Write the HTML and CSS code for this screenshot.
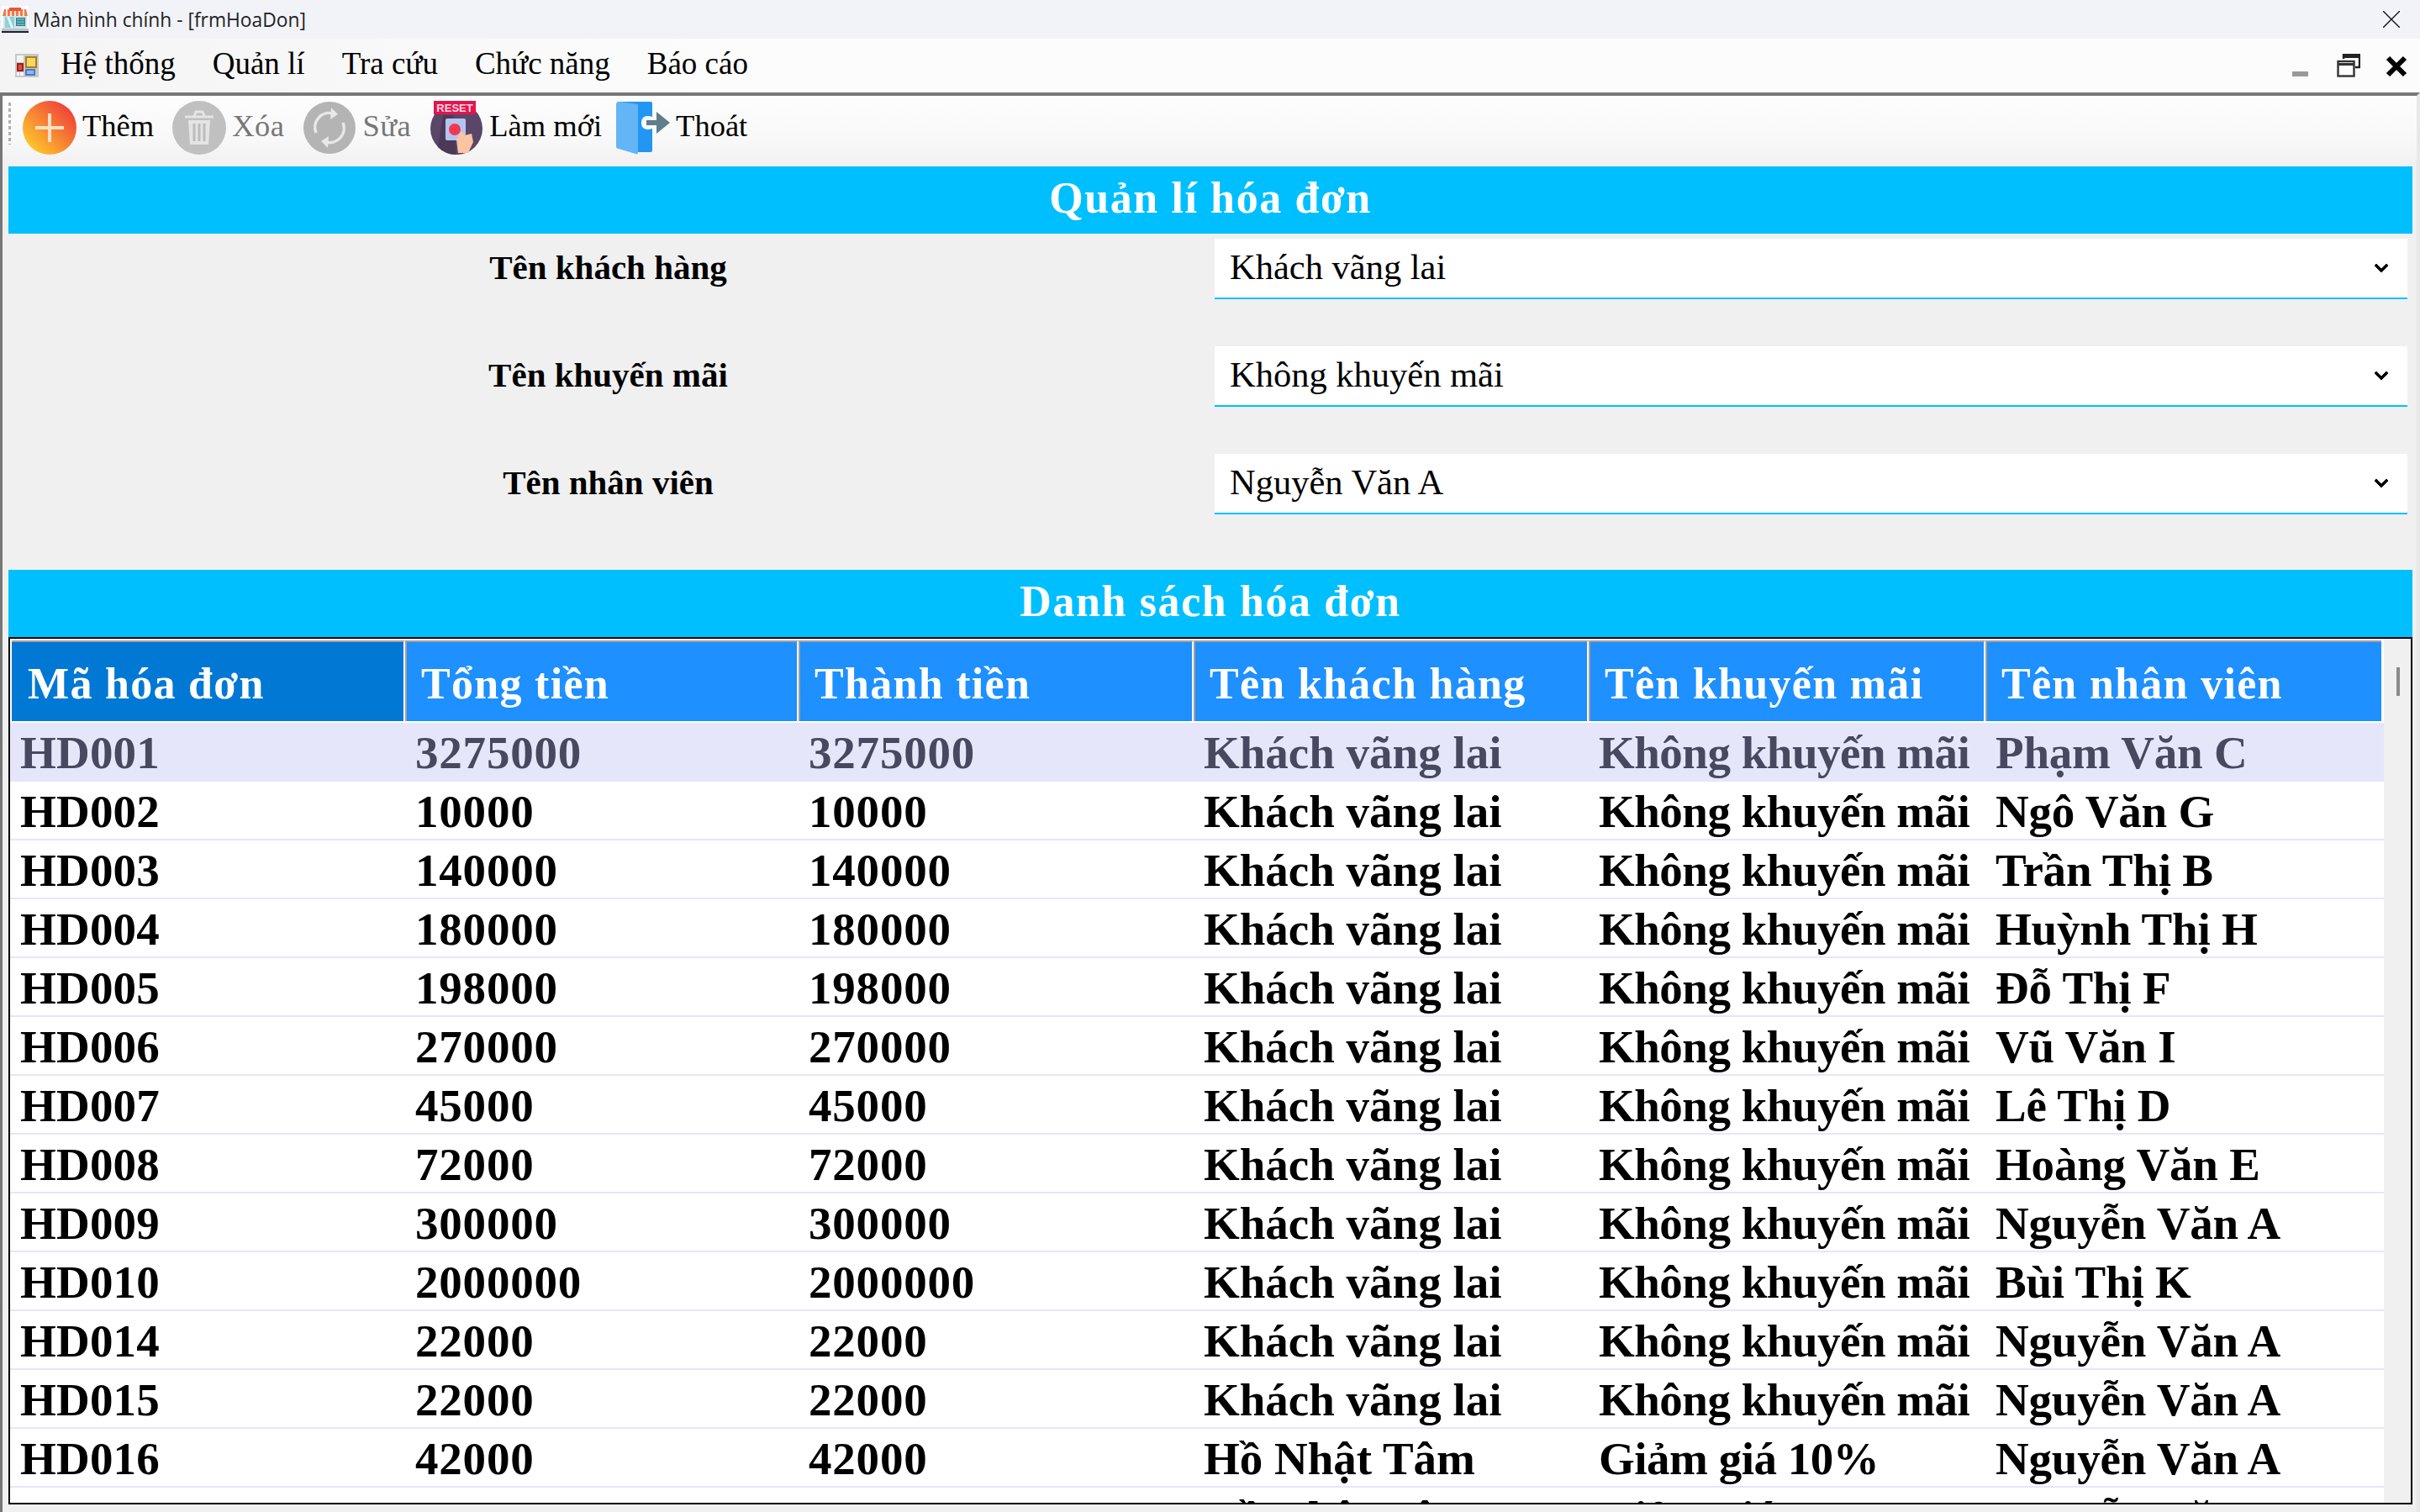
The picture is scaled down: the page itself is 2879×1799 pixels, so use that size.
FILE: index.html
```html
<!DOCTYPE html>
<html lang="vi">
<head>
    <meta charset="UTF-8">
    <title>Màn hình chính - [frmHoaDon]</title>
    <link rel="stylesheet" href="styles.css">
</head>
<body>

    <!-- TITLE BAR -->
    <div class="titlebar">
        <svg class="app-icon" viewBox="0 0 32 32">
            <rect width="32" height="32" fill="#fff"/>
            <rect x="2" y="12" width="28" height="15" fill="#cfe6ea"/>
            <rect x="4" y="13" width="11" height="13" fill="#8fd0dc"/>
            <path d="M6 13l5 13h3l-5-13z" fill="#e6f6f8"/>
            <rect x="17" y="14" width="11" height="10" fill="#2f7f8c"/>
            <path d="M18 16h9M18 19h9M18 22h9" stroke="#9fe0df" stroke-width="1"/>
            <path d="M3 4h26l2 8H1z" fill="#f07a4a"/>
            <path d="M6 4v8M11 4v8M16 4v8M21 4v8M26 4v8" stroke="#fff" stroke-width="1.6"/>
            <rect x="9" y="2" width="14" height="4" fill="#e8553a"/>
            <rect x="0" y="27" width="32" height="3" fill="#b8c4c4"/>
            <rect x="0" y="30" width="32" height="2" fill="#1d2233"/>
        </svg>
        <span class="title-text">Màn hình chính - [frmHoaDon]</span>
        <svg class="title-close" viewBox="0 0 20 20"><path d="M0 0l20 20M20 0L0 20" stroke="#111" stroke-width="1.4"/></svg>
    </div>

    <!-- MENU -->
    <div class="menubar">
        <svg class="menu-icon" viewBox="0 0 28 28">
            <rect width="28" height="28" fill="#c8c8c8"/>
            <rect x="2" y="2" width="8" height="8" fill="#f4f4f4"/>
            <rect x="12" y="3" width="14" height="14" fill="#a8801e"/>
            <rect x="14" y="5" width="10" height="10" fill="#f8d860"/>
            <rect x="2" y="11" width="8" height="10" fill="#a02018"/>
            <rect x="4" y="13" width="4" height="6" fill="#e05040"/>
            <rect x="12" y="18" width="12" height="8" fill="#4878d0"/>
            <rect x="14" y="20" width="8" height="4" fill="#90b8f0"/>
            <rect x="2" y="22" width="3" height="4" fill="#f4f4f4"/>
            <rect x="6" y="22" width="4" height="4" fill="#f4f4f4"/>
        </svg>
        <span class="menu-item">Hệ thống</span>
        <span class="menu-item">Quản lí</span>
        <span class="menu-item">Tra cứu</span>
        <span class="menu-item">Chức năng</span>
        <span class="menu-item">Báo cáo</span>
        <div class="win-buttons">
            <span class="win-min"></span>
            <svg class="win-restore" viewBox="0 0 28 28">
                <path d="M8 6V1h19v15h-5" fill="none" stroke="#222" stroke-width="2.4"/>
                <path d="M8 3.500h19" stroke="#222" stroke-width="3"/>
                <rect x="1.500" y="9" width="19" height="17.500" fill="none" stroke="#333" stroke-width="2.4"/>
                <path d="M1 12.500h20" stroke="#333" stroke-width="3"/>
            </svg>
            <svg class="win-close" viewBox="0 0 26 26"><path d="M3 3l20 20M23 3L3 23" stroke="#000" stroke-width="6"/></svg>
        </div>
    </div>

    <div class="main">

        <!-- TOOLBAR -->
        <div class="toolbar">
            <span class="grip"></span>
            <div class="tool">
                <svg class="tool-icon" viewBox="0 0 64 64">
                    <defs>
                        <linearGradient id="gradThem" x1="0" y1="1" x2="1" y2="0">
                            <stop offset="0.1" stop-color="#ffcb2c"/>
                            <stop offset="0.9" stop-color="#ef3b3b"/>
                        </linearGradient>
                    </defs>
                    <circle cx="32" cy="32" r="32" fill="url(#gradThem)"/>
                    <path d="M32 15v34M15 32h34" stroke="#ffe0c4" stroke-width="4"/>
                </svg>
                <span>Thêm</span>
            </div>
            <div class="tool disabled">
                <svg class="tool-icon" viewBox="0 0 64 64">
                    <circle cx="32" cy="32" r="32" fill="#c0c0c0"/>
                    <path d="M15 19h34M26 18l2-5h8l2 5" stroke="#e4e4e4" stroke-width="3" fill="none"/>
                    <path d="M19 23h26l-2 29H21z" fill="#e4e4e4"/>
                    <path d="M26 27v21M32 27v21M38 27v21" stroke="#bcbcbc" stroke-width="3"/>
                </svg>
                <span>Xóa</span>
            </div>
            <div class="tool disabled">
                <svg class="tool-icon" viewBox="0 0 64 64">
                    <circle cx="32" cy="32" r="31" fill="#b4b4b4"/>
                    <path d="M16 38A17 17 0 0 1 36 15" stroke="#e8e8e8" stroke-width="3.500" fill="none"/>
                    <path d="M48 26A17 17 0 0 1 28 49" stroke="#e8e8e8" stroke-width="3.500" fill="none"/>
                    <path d="M34 8l8 8-9 6zM30 56l-8-8 9-6z" fill="#e8e8e8"/>
                </svg>
                <span>Sửa</span>
            </div>
            <div class="tool tool-reset">
                <svg class="tool-icon" viewBox="0 0 64 64">
                    <circle cx="32" cy="33" r="31" fill="#5a4668"/>
                    <path d="M32 64a31 31 0 0 1-22-9l6-38h12z" fill="#4a3a58"/>
                    <rect x="5" y="0" width="50" height="16" fill="#e4144e"/>
                    <text class="reset-text" x="30" y="13" text-anchor="middle">RESET</text>
                    <rect x="19" y="21" width="24" height="26" rx="2" fill="#b6c4f2"/>
                    <circle cx="30" cy="34" r="7" fill="#f03a52"/>
                    <path d="M32 46l6-10 4 5 8-2 2 10-6 13H34z" fill="#fcc4a0"/>
                </svg>
                <span>Làm mới</span>
            </div>
            <div class="tool">
                <svg class="tool-icon" viewBox="0 0 64 64">
                    <path d="M2 1h39a2 2 0 0 1 2 2v56a2 2 0 0 1-2 2H24z" fill="#2196f3"/>
                    <path d="M0 4a3 3 0 0 1 4-3l22 3v58a2 2 0 0 1-3 1L3 57a3 3 0 0 1-3-3z" fill="#64b5f6"/>
                    <rect x="30" y="18" width="16" height="16" rx="7" fill="#fafafa"/>
                    <path d="M36 23h12V13l16 13-16 13V29H36z" fill="#607d8b"/>
                </svg>
                <span>Thoát</span>
            </div>
        </div>

        <!-- QUAN LI HOA DON -->
        <div class="section">
            <h2 class="band">Quản lí hóa đơn</h2>
            <div class="form-grid">
                <label class="form-label">Tên khách hàng</label>
                <div class="combo"><span>Khách vãng lai</span><svg class="chevron" viewBox="0 0 18 12"><path d="M2 2l7 7 7-7" fill="none" stroke="#000" stroke-width="4"/></svg></div>
                <label class="form-label">Tên khuyến mãi</label>
                <div class="combo"><span>Không khuyến mãi</span><svg class="chevron" viewBox="0 0 18 12"><path d="M2 2l7 7 7-7" fill="none" stroke="#000" stroke-width="4"/></svg></div>
                <label class="form-label">Tên nhân viên</label>
                <div class="combo"><span>Nguyễn Văn A</span><svg class="chevron" viewBox="0 0 18 12"><path d="M2 2l7 7 7-7" fill="none" stroke="#000" stroke-width="4"/></svg></div>
            </div>
        </div>

        <!-- DANH SACH HOA DON -->
        <div class="section list-section">
            <h2 class="band">Danh sách hóa đơn</h2>
            <div class="grid">
                <div class="grid-body">
                    <div class="grid-head">
                        <div class="head-cell selected">Mã hóa đơn</div>
                        <div class="head-cell">Tổng tiền</div>
                        <div class="head-cell">Thành tiền</div>
                        <div class="head-cell">Tên khách hàng</div>
                        <div class="head-cell">Tên khuyến mãi</div>
                        <div class="head-cell">Tên nhân viên</div>
                    </div>
                    <div class="grid-row current"><span>HD001</span><span>3275000</span><span>3275000</span><span>Khách vãng lai</span><span>Không khuyến mãi</span><span>Phạm Văn C</span></div>
                    <div class="grid-row"><span>HD002</span><span>10000</span><span>10000</span><span>Khách vãng lai</span><span>Không khuyến mãi</span><span>Ngô Văn G</span></div>
                    <div class="grid-row"><span>HD003</span><span>140000</span><span>140000</span><span>Khách vãng lai</span><span>Không khuyến mãi</span><span>Trần Thị B</span></div>
                    <div class="grid-row"><span>HD004</span><span>180000</span><span>180000</span><span>Khách vãng lai</span><span>Không khuyến mãi</span><span>Huỳnh Thị H</span></div>
                    <div class="grid-row"><span>HD005</span><span>198000</span><span>198000</span><span>Khách vãng lai</span><span>Không khuyến mãi</span><span>Đỗ Thị F</span></div>
                    <div class="grid-row"><span>HD006</span><span>270000</span><span>270000</span><span>Khách vãng lai</span><span>Không khuyến mãi</span><span>Vũ Văn I</span></div>
                    <div class="grid-row"><span>HD007</span><span>45000</span><span>45000</span><span>Khách vãng lai</span><span>Không khuyến mãi</span><span>Lê Thị D</span></div>
                    <div class="grid-row"><span>HD008</span><span>72000</span><span>72000</span><span>Khách vãng lai</span><span>Không khuyến mãi</span><span>Hoàng Văn E</span></div>
                    <div class="grid-row"><span>HD009</span><span>300000</span><span>300000</span><span>Khách vãng lai</span><span>Không khuyến mãi</span><span>Nguyễn Văn A</span></div>
                    <div class="grid-row"><span>HD010</span><span>2000000</span><span>2000000</span><span>Khách vãng lai</span><span>Không khuyến mãi</span><span>Bùi Thị K</span></div>
                    <div class="grid-row"><span>HD014</span><span>22000</span><span>22000</span><span>Khách vãng lai</span><span>Không khuyến mãi</span><span>Nguyễn Văn A</span></div>
                    <div class="grid-row"><span>HD015</span><span>22000</span><span>22000</span><span>Khách vãng lai</span><span>Không khuyến mãi</span><span>Nguyễn Văn A</span></div>
                    <div class="grid-row"><span>HD016</span><span>42000</span><span>42000</span><span>Hồ Nhật Tâm</span><span>Giảm giá 10%</span><span>Nguyễn Văn A</span></div>
                    <div class="grid-row"><span>HD017</span><span>42000</span><span>42000</span><span>Hồ Nhật Tâm</span><span>Giảm giá 10%</span><span>Nguyễn Văn A</span></div>
                </div>
                <div class="scroll"><span class="thumb"></span></div>
            </div>
        </div>
    </div>

</body>
</html>
```

FILE: styles.css
```css
html, body {
    margin: 0;
    height: 1799px;
    overflow: hidden;
}

body {
    display: flex;
    flex-direction: column;
    background-color: #f0f0f0;
    font-family: "Liberation Serif", serif;
    color: #000;
}

/* title bar */
.titlebar {
    display: flex;
    align-items: center;
    flex: 0 0 46px;
    background-color: #f1f3f9;
    padding-left: 2px;
}

.app-icon {
    width: 32px;
    height: 32px;
}

.title-text {
    font-family: "Open Sans", sans-serif;
    font-size: 22.8px;
    margin-left: 5px;
    color: #222;
}

.title-close {
    width: 20px;
    height: 20px;
    margin-left: auto;
    margin-right: 24px;
}

/* menu */
.menubar {
    display: flex;
    align-items: center;
    flex: 0 0 64px;
    background: linear-gradient(to right, #f4f4f4, #fcfcfc 30%);
    padding-left: 18px;
}

.menu-icon {
    width: 28px;
    height: 28px;
    margin-right: 26px;
}

.menu-item {
    font-size: 37px;
    margin-right: 44px;
    padding-bottom: 5px;
}

.win-buttons {
    display: flex;
    align-items: flex-end;
    margin-left: auto;
    margin-right: 15px;
}

.win-min {
    width: 19px;
    height: 6px;
    background-color: #999;
    margin-right: 34px;
    margin-bottom: 1px;
}

.win-restore {
    width: 28px;
    height: 28px;
    margin-right: 30px;
}

.win-close {
    width: 26px;
    height: 26px;
}

/* everything under the menu */
.main {
    flex: 1;
    display: flex;
    flex-direction: column;
    border-top: 4px solid #777;
    border-left: 3px solid #777;
    border-right: 4px solid #e8e8e8;
    min-height: 0;
}

.toolbar {
    display: flex;
    align-items: center;
    flex: 0 0 84px;
    box-sizing: border-box;
    background: linear-gradient(to bottom, #fdfdfd, #f8f8f8 65%, #f0f0f0);
    padding: 0 0 8px 7px;
}

.grip {
    width: 3px;
    height: 50px;
    margin-right: 14px;
    margin-bottom: 10px;
    background-image: linear-gradient(to bottom, #b0b0b0 60%, transparent 60%);
    background-size: 3px 7px;
}

.tool {
    display: flex;
    align-items: center;
    gap: 7px;
    font-size: 36.5px;
    margin-right: 22px;
}

.tool span {
    padding-bottom: 6px;
}

.tool.disabled {
    color: #777;
}

.tool.disabled span {
    letter-spacing: 0.5px;
}

.tool-reset {
    margin-right: 17px;
}

.tool-icon {
    width: 64px;
    height: 64px;
}

.reset-text {
    font-family: "Liberation Sans", sans-serif;
    font-weight: bold;
    font-size: 13px;
    fill: #ffd8e0;
}

/* sections */
.section {
    margin-left: 7px;
    margin-right: 5px;
}

.list-section {
    flex: 1;
    display: flex;
    flex-direction: column;
    min-height: 0;
    padding-bottom: 9px;
}

.band {
    margin: 0;
    height: 80px;
    line-height: 76px;
    background-color: #00bfff;
    color: #fff;
    font-size: 52px;
    font-weight: bold;
    text-align: center;
    letter-spacing: 1.6px;
}

.form-grid {
    display: grid;
    grid-template-columns: 1435px 1419px;
    grid-auto-rows: 72px;
    row-gap: 56px;
    align-items: center;
    box-sizing: border-box;
    padding-top: 6px;
    height: 400px;
}

.form-label {
    font-size: 41px;
    font-weight: bold;
    text-align: center;
    padding-right: 8px;
    padding-bottom: 4px;
}

.combo {
    display: flex;
    align-items: center;
    justify-content: space-between;
    height: 72px;
    box-sizing: border-box;
    background-color: #fff;
    border-bottom: 2px solid #00bfff;
    padding: 0 22px 0 18px;
    font-size: 42.5px;
}

.combo span {
    padding-bottom: 3px;
}

.chevron {
    width: 18px;
    height: 12px;
    shape-rendering: crispEdges;
}

/* data grid */
.grid {
    flex: 1;
    min-height: 0;
    display: flex;
    border: 2px solid #000;
    background-color: #fff;
    overflow: hidden;
}

.grid-body {
    width: 2824px;
    padding-top: 2px;
}

.grid-head, .grid-row {
    display: grid;
    grid-template-columns: 470px 468px 470px 470px 472px 473px;
}

.grid-head {
    height: 96px;
    margin-bottom: 2px;
}

.head-cell {
    display: flex;
    align-items: center;
    padding-left: 17px;
    padding-top: 4px;
    background-color: #1e90ff;
    color: #fff;
    font-size: 52px;
    font-weight: bold;
    letter-spacing: 1.3px;
    border-top: 2px solid #a0a0a0;
    border-left: 2px solid #a0a0a0;
    border-right: 2px solid #fff;
}

.head-cell:last-child {
    border-right: 0;
    margin-right: 2px;
}

.head-cell.selected {
    background-color: #0078d4;
    border-left: 0;
    margin-left: 2px;
    padding-left: 19px;
}

.grid-row {
    height: 70px;
    box-sizing: border-box;
    align-items: center;
    border-bottom: 2px solid #e6e6fa;
    font-size: 55px;
    font-weight: bold;
    white-space: nowrap;
}

.grid-row span {
    padding-left: 12px;
    padding-top: 2px;
}

.grid-row span:nth-child(1) {
    letter-spacing: 0.2px;
}

.grid-row span:nth-child(2), .grid-row span:nth-child(3) {
    letter-spacing: 0.8px;
}

.grid-row span:nth-child(5) {
    letter-spacing: -0.5px;
}

.grid-row span:nth-child(6) {
    letter-spacing: -0.2px;
}

.grid-row.current {
    background-color: #e6e6fa;
    color: #484860;
}

.scroll {
    flex: 1;
    background-color: #f0f0f0;
    padding: 34px 0 0 15px;
}

.thumb {
    display: block;
    width: 4px;
    height: 34px;
    background-color: #8a8a8a;
}
```
